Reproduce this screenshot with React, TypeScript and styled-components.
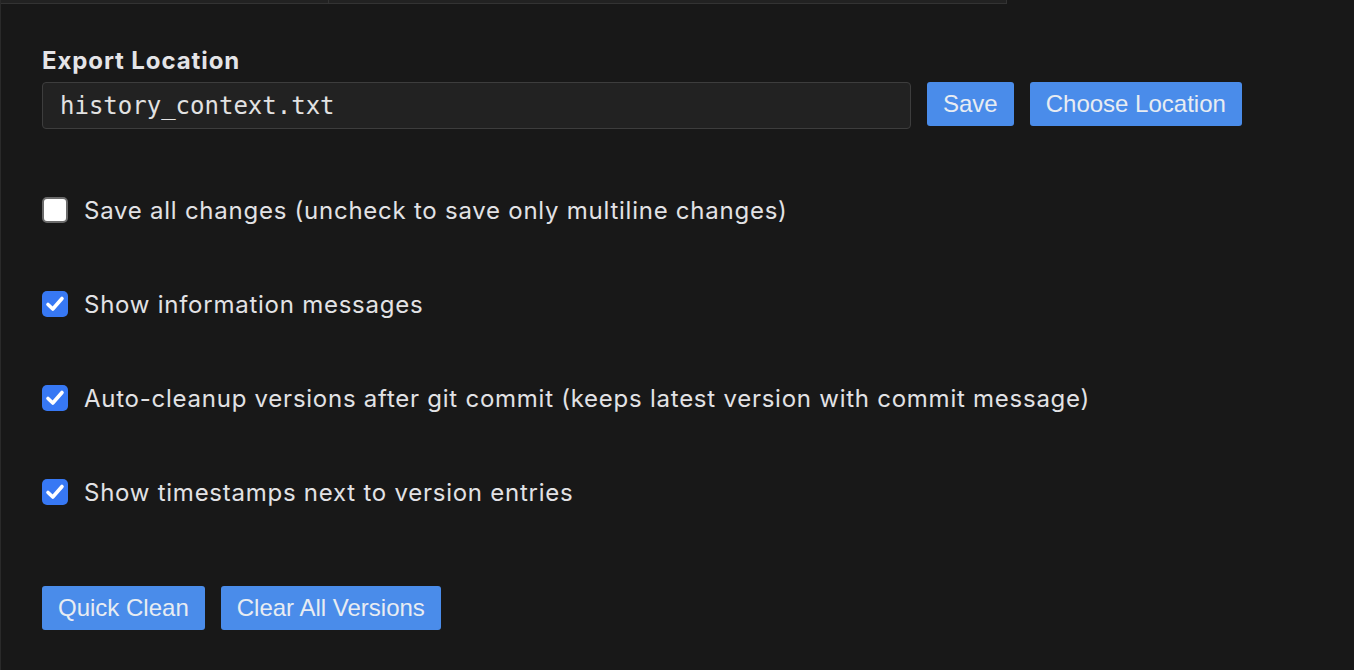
import React, { useState } from 'react'
import styled, { createGlobalStyle } from 'styled-components'

const GlobalStyle = createGlobalStyle`
  html, body {
    margin: 0;
    padding: 0;
    background: #181818;
    height: 100%;
  }
  #root {
    min-height: 100vh;
  }
`

const Page = styled.div`
  min-height: 100vh;
  box-sizing: border-box;
  border-left: 1px solid #2a2a2a;
  background: #181818;
  color: #e2e2e5;
  font-family: Inter, 'Noto Sans', sans-serif;
`

const TabStrip = styled.div`
  display: flex;
  width: 1005px;
  height: 3px;
  border-bottom: 1px solid #333333;
  border-right: 1px solid #333333;
`

interface TabCellProps {
  width: number
}

const TabCell = styled.div<TabCellProps>`
  width: ${(props) => props.width}px;
  height: 100%;
  background: #222222;
  border-right: 1px solid #333333;
  &:last-child {
    border-right: none;
  }
`

const Content = styled.div`
  display: flex;
  flex-direction: column;
  padding: 42px 0 0 41px;
`

const Heading = styled.h2`
  margin: 0 0 6px 0;
  font-size: 24px;
  font-weight: 700;
  line-height: 30px;
  letter-spacing: 0.9px;
  color: #e4e4e7;
`

const InputRow = styled.div`
  display: flex;
  align-items: flex-start;
  gap: 16px;
`

const PathInput = styled.input`
  box-sizing: border-box;
  width: 869px;
  height: 47px;
  padding: 0 17px;
  background: #222222;
  border: 1px solid #3d3d3d;
  border-radius: 4px;
  color: #e2e2e2;
  font-family: 'DejaVu Sans Mono', 'Liberation Mono', monospace;
  font-size: 24px;
  outline: none;
`

const ActionButton = styled.button`
  box-sizing: border-box;
  height: 44px;
  padding: 0 16px;
  background: #4a8cea;
  border: none;
  border-radius: 3px;
  color: #e8ecf2;
  font-family: 'Liberation Sans', Arial, sans-serif;
  font-size: 24px;
  cursor: pointer;
`

const OptionList = styled.div`
  display: flex;
  flex-direction: column;
  gap: 48px;
  margin-top: 58px;
`

const OptionRow = styled.label`
  display: flex;
  align-items: center;
  gap: 16px;
  height: 46px;
  font-size: 24px;
  letter-spacing: 0.75px;
  cursor: pointer;
`

interface BoxProps {
  checked: boolean
}

const Box = styled.span<BoxProps>`
  display: flex;
  align-items: center;
  justify-content: center;
  width: 26px;
  height: 26px;
  box-sizing: border-box;
  border-radius: 5px;
  background: ${(props) => (props.checked ? '#3778f4' : '#ffffff')};
  border: ${(props) => (props.checked ? 'none' : '2px solid #6b6b6b')};
  flex-shrink: 0;
`

const HiddenCheck = styled.input`
  display: none;
`

const ButtonRow = styled.div`
  display: flex;
  gap: 16px;
  margin-top: 71px;
`

const options = [
  { label: 'Save all changes (uncheck to save only multiline changes)', checked: false },
  { label: 'Show information messages', checked: true },
  { label: 'Auto-cleanup versions after git commit (keeps latest version with commit message)', checked: true },
  { label: 'Show timestamps next to version entries', checked: true },
]

const Option = ({ label, initial }: { label: string; initial: boolean }) => {
  const [checked, setChecked] = useState(initial)
  return (
    <OptionRow>
      <HiddenCheck type="checkbox" checked={checked} onChange={() => setChecked(!checked)} />
      <Box checked={checked}>
        {checked && (
          <svg width="22" height="22" viewBox="0 0 22 22">
            <path d="M4 11.5 L8.8 16 L18 5.5" fill="none" stroke="#ffffff" strokeWidth="3.6" strokeLinecap="round" strokeLinejoin="round" />
          </svg>
        )}
      </Box>
      <span>{label}</span>
    </OptionRow>
  )
}

const App = () => {
  const [path, setPath] = useState('history_context.txt')
  return (
    <>
      <GlobalStyle />
      <Page>
        <TabStrip>
          <TabCell width={327} />
          <TabCell width={678} />
        </TabStrip>
        <Content>
          <Heading>Export Location</Heading>
          <InputRow>
            <PathInput value={path} onChange={(e) => setPath(e.target.value)} />
            <ActionButton>Save</ActionButton>
            <ActionButton>Choose Location</ActionButton>
          </InputRow>
          <OptionList>
            {options.map((o) => (
              <Option key={o.label} label={o.label} initial={o.checked} />
            ))}
          </OptionList>
          <ButtonRow>
            <ActionButton>Quick Clean</ActionButton>
            <ActionButton>Clear All Versions</ActionButton>
          </ButtonRow>
        </Content>
      </Page>
    </>
  )
}

export default App
